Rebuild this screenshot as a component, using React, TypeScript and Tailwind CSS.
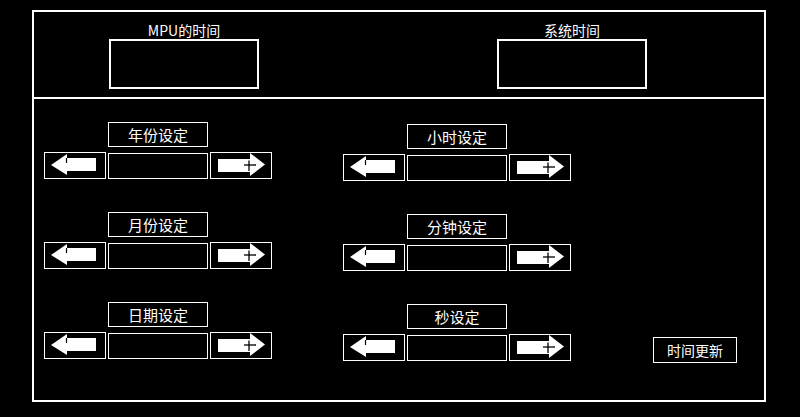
const font = { fontFamily: '"Noto Sans CJK SC", "Noto Sans", sans-serif' };

function LeftArrow() {
  return (
    <svg width="60" height="25" viewBox="0 0 60 25">
      <polygon points="6,12 22,1 22,22" fill="#fff" />
      <rect x="22" y="5" width="29" height="13" fill="#fff" />
      <line x1="21.5" y1="5" x2="21.5" y2="10" stroke="#000" strokeWidth="1.2" />
    </svg>
  );
}

function RightArrow() {
  return (
    <svg width="60" height="25" viewBox="0 0 60 25">
      <rect x="7" y="6" width="33" height="13" fill="#fff" />
      <polygon points="39,0 54,11.5 39,23" fill="#fff" />
      <line x1="33" y1="12" x2="45" y2="12" stroke="#000" strokeWidth="1.3" />
      <line x1="38" y1="7.5" x2="38" y2="18" stroke="#000" strokeWidth="1.3" />
    </svg>
  );
}

function Setting({ label }: { label: string }) {
  return (
    <div className="flex flex-col h-[90px]">
      <div className="ml-[64px] w-[100px] h-[25px] border border-white flex items-center justify-center text-[15px] leading-none text-white">
        {label}
      </div>
      <div className="mt-[5px] flex items-center gap-[2px]">
        <button className="w-[62px] h-[27px] border border-white flex items-center justify-center">
          <LeftArrow />
        </button>
        <div className="w-[100px] h-[26px] border border-white" />
        <button className="w-[62px] h-[27px] border border-white flex items-center justify-center">
          <RightArrow />
        </button>
      </div>
    </div>
  );
}

export default function App() {
  return (
    <div className="w-[800px] h-[417px] bg-black pt-[10px] pl-[32px]" style={font}>
      <div className="w-[734px] h-[392px] border-2 border-white flex flex-col">
        <div className="h-[87px] border-b-2 border-white flex pl-[75px] gap-[238px] pt-[10px]">
          <div className="flex flex-col items-center">
            <div className="text-[14px] leading-[16px] text-white">MPU的时间</div>
            <div className="mt-[1px] w-[150px] h-[50px] border-2 border-white" />
          </div>
          <div className="flex flex-col items-center">
            <div className="text-[14px] leading-[16px] text-white">系统时间</div>
            <div className="mt-[1px] w-[150px] h-[50px] border-2 border-white" />
          </div>
        </div>
        <div className="flex pl-[10px] pt-[23px]">
          <div className="flex flex-col">
            <Setting label="年份设定" />
            <Setting label="月份设定" />
            <Setting label="日期设定" />
          </div>
          <div className="flex flex-col ml-[71px] pt-[2px]">
            <Setting label="小时设定" />
            <Setting label="分钟设定" />
            <Setting label="秒设定" />
          </div>
          <div className="ml-[82px] mt-[215px] w-[84px] h-[26px] border border-white flex items-center justify-center text-[14px] leading-none text-white">
            时间更新
          </div>
        </div>
      </div>
    </div>
  );
}
